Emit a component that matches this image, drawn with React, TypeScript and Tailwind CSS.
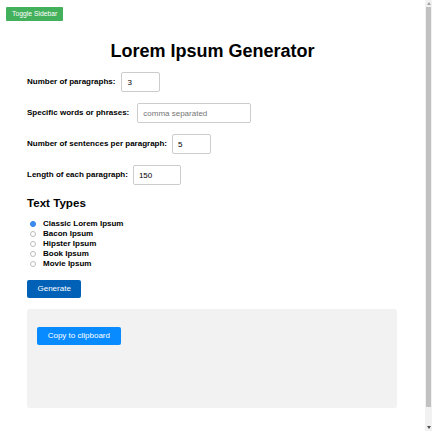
import React, { useState } from 'react';

const fields = [
  { label: 'Number of paragraphs:', value: '3', width: 'w-[39px]', gap: 'ml-[6px]' },
  { label: 'Specific words or phrases:', value: '', placeholder: 'comma separated', width: 'w-[114px]', gap: 'ml-[8px]' },
  { label: 'Number of sentences per paragraph:', value: '5', width: 'w-[39px]', gap: 'ml-[5px]' },
  { label: 'Length of each paragraph:', value: '150', width: 'w-[48px]', gap: 'ml-[5px]' },
];

const textTypes = ['Classic Lorem Ipsum', 'Bacon Ipsum', 'Hipster Ipsum', 'Book Ipsum', 'Movie Ipsum'];

// page scrollbar as it shows in the capture
const Scrollbar = () => (
  <div className="flex w-[7px] shrink-0 flex-col items-center bg-[#f1f1f1]">
    <div className="flex h-[7px] items-center justify-center">
      <svg width="4" height="3" viewBox="0 0 4 3">
        <path d="M2 0 L4 3 L0 3 Z" fill="#a3a3a3" />
      </svg>
    </div>
    <div className="h-[400px] w-[5px] bg-[#c1c1c1]" />
    <div className="flex-1" />
    <div className="flex h-[7px] items-center justify-center">
      <svg width="4" height="3" viewBox="0 0 4 3">
        <path d="M0 0 L4 0 L2 3 Z" fill="#505050" />
      </svg>
    </div>
  </div>
);

const App = () => {
  const [type, setType] = useState('Classic Lorem Ipsum');

  return (
    <div className="flex h-[431px] overflow-hidden bg-white font-['Liberation_Sans',Arial,sans-serif] text-black">
      <div className="min-w-0 flex-1">
        {/* Sidebar toggle */}
        <button className="ml-[6px] mt-[7px] block h-[14px] rounded-[1px] bg-[#43b05c] px-[6px] text-[6.8px] leading-[14px] text-white">
          Toggle Sidebar
        </button>

        <div className="ml-[27px] mr-[28px] pb-[41px]">
          <h1 className="-ml-[27px] -mr-[28px] mt-[20px] text-center text-[18px] font-bold leading-[20px]">
            Lorem Ipsum Generator
          </h1>

          {/* Options */}
          <div className="mt-[11px] flex flex-col gap-[11px]">
            {fields.map((f) => (
              <div key={f.label} className="flex h-[20px] items-center">
                <label className="text-[8px] font-bold leading-[10px]">{f.label}</label>
                <input
                  defaultValue={f.value}
                  placeholder={f.placeholder}
                  className={`${f.width} ${f.gap} h-[20px] rounded-[2px] border border-[#cccccc] px-[5px] text-[8px] text-black outline-none placeholder:text-[#757575]`}
                />
              </div>
            ))}
          </div>

          <h2 className="mt-[11px] text-[11.6px] font-bold leading-[13px]">Text Types</h2>

          <div className="mt-[10px] flex flex-col">
            {textTypes.map((t) => (
              <label key={t} className="flex h-[10px] items-center">
                <input
                  type="radio"
                  name="textType"
                  checked={type === t}
                  onChange={() => setType(t)}
                  className="m-0 ml-[3px] mr-[7px] h-[6px] w-[6px] appearance-none rounded-full border border-[#bdbdbd] bg-white checked:border-[#2f7fea] checked:bg-[#3d8df2]"
                />
                <span className="text-[8px] font-bold leading-[10px]">{t}</span>
              </label>
            ))}
          </div>

          <button className="mt-[11px] block h-[18px] rounded-[2px] bg-[#0161b6] px-[10.5px] text-[8px] leading-[18px] text-white">
            Generate
          </button>

          {/* Output */}
          <div className="mt-[11px] h-[99px] rounded-[2px] bg-[#f2f2f2] pl-[10px] pt-[18px]">
            <button className="block h-[18px] rounded-[2px] bg-[#088bff] px-[10.7px] text-[8px] leading-[18px] text-white">
              Copy to clipboard
            </button>
          </div>
        </div>
      </div>
      <Scrollbar />
    </div>
  );
};

export default App;
